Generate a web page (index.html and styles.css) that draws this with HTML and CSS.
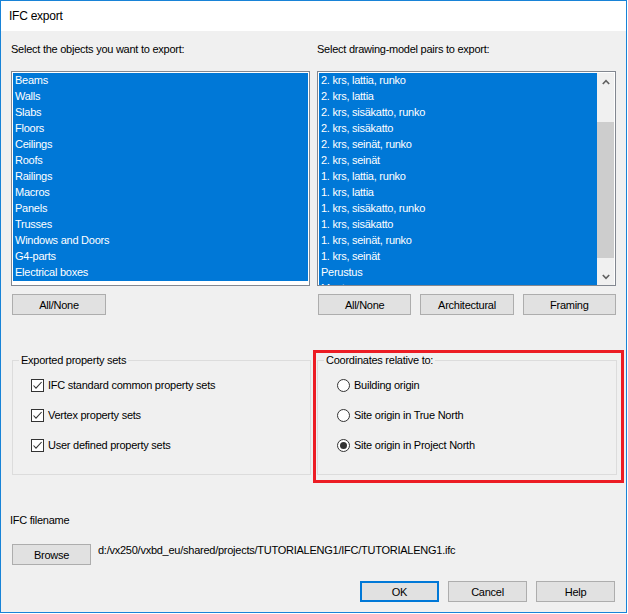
FILE: index.html
```html
<!DOCTYPE html>
<html>
<head>
<meta charset="utf-8">
<link rel="stylesheet" href="styles.css">
</head>
<body>
<div class="window">
  <div class="titlebar">IFC export</div>
  <div class="content">
    <div class="columns">
      <div class="col">
        <div class="label">Select the objects you want to export:</div>
        <div class="listbox">
          <div class="items">
            <div class="item">Beams</div>
            <div class="item">Walls</div>
            <div class="item">Slabs</div>
            <div class="item">Floors</div>
            <div class="item">Ceilings</div>
            <div class="item">Roofs</div>
            <div class="item">Railings</div>
            <div class="item">Macros</div>
            <div class="item">Panels</div>
            <div class="item">Trusses</div>
            <div class="item">Windows and Doors</div>
            <div class="item">G4-parts</div>
            <div class="item">Electrical boxes</div>
          </div>
        </div>
        <div class="btnrow">
          <div class="btn">All/None</div>
        </div>
      </div>
      <div class="col">
        <div class="label">Select drawing-model pairs to export:</div>
        <div class="listbox scroll">
          <div class="items">
            <div class="item">2. krs, lattia, runko</div>
            <div class="item">2. krs, lattia</div>
            <div class="item">2. krs, sisäkatto, runko</div>
            <div class="item">2. krs, sisäkatto</div>
            <div class="item">2. krs, seinät, runko</div>
            <div class="item">2. krs, seinät</div>
            <div class="item">1. krs, lattia, runko</div>
            <div class="item">1. krs, lattia</div>
            <div class="item">1. krs, sisäkatto, runko</div>
            <div class="item">1. krs, sisäkatto</div>
            <div class="item">1. krs, seinät, runko</div>
            <div class="item">1. krs, seinät</div>
            <div class="item">Perustus</div>
            <div class="item">Muut</div>
          </div>
          <div class="scrollbar">
            <div class="arrow">
              <svg width="8" height="6" viewBox="0 0 8 6"><polyline points="0.8,5 4,1.6 7.2,5" fill="none" stroke="#606060" stroke-width="1.6"/></svg>
            </div>
            <div class="track"><div class="thumb"></div></div>
            <div class="arrow">
              <svg width="8" height="6" viewBox="0 0 8 6"><polyline points="0.8,1 4,4.4 7.2,1" fill="none" stroke="#606060" stroke-width="1.6"/></svg>
            </div>
          </div>
        </div>
        <div class="btnrow">
          <div class="btn">All/None</div>
          <div class="btn">Architectural</div>
          <div class="btn">Framing</div>
        </div>
      </div>
    </div>

    <div class="groups">
      <fieldset class="group left">
        <legend>Exported property sets</legend>
        <div class="opt">
          <span class="check"><svg width="11" height="11" viewBox="0 0 11 11"><polyline points="1.5,5.5 4,8.2 9.6,2" fill="none" stroke="#333" stroke-width="1.1"/></svg></span>
          <span>IFC standard common property sets</span>
        </div>
        <div class="opt">
          <span class="check"><svg width="11" height="11" viewBox="0 0 11 11"><polyline points="1.5,5.5 4,8.2 9.6,2" fill="none" stroke="#333" stroke-width="1.1"/></svg></span>
          <span>Vertex property sets</span>
        </div>
        <div class="opt">
          <span class="check"><svg width="11" height="11" viewBox="0 0 11 11"><polyline points="1.5,5.5 4,8.2 9.6,2" fill="none" stroke="#333" stroke-width="1.1"/></svg></span>
          <span>User defined property sets</span>
        </div>
      </fieldset>
      <fieldset class="group right">
        <legend>Coordinates relative to:</legend>
        <div class="opt">
          <span class="radio"></span>
          <span>Building origin</span>
        </div>
        <div class="opt">
          <span class="radio"></span>
          <span>Site origin in True North</span>
        </div>
        <div class="opt">
          <span class="radio on"></span>
          <span>Site origin in Project North</span>
        </div>
      </fieldset>
    </div>

    <div class="filelabel">IFC filename</div>
    <div class="filerow">
      <div class="btn browse">Browse</div>
      <div class="path">d:/vx250/vxbd_eu/shared/projects/TUTORIALENG1/IFC/TUTORIALENG1.ifc</div>
    </div>

    <div class="footer">
      <div class="btn fbtn default">OK</div>
      <div class="btn fbtn">Cancel</div>
      <div class="btn fbtn">Help</div>
    </div>
  </div>
  <div class="highlight"></div>
</div>
</body>
</html>
```

FILE: styles.css
```css
html, body {
  margin: 0;
  padding: 0;
  background: #ffffff;
}

body {
  font-family: "Liberation Sans", Arial, sans-serif;
  font-size: 11px;
  letter-spacing: -0.25px;
  color: #000;
}

.window {
  position: relative;
  width: 627px;
  height: 613px;
  box-sizing: border-box;
  border: 1px solid #1883d7;
  background: #f0f0f0;
}

.titlebar {
  height: 30px;
  line-height: 30px;
  background: #ffffff;
  padding-left: 8px;
  font-size: 12px;
}

.content {
  padding: 0 10px 0 10px;
}

.columns {
  display: grid;
  grid-template-columns: 299px 299px;
  column-gap: 7px;
}

.col {
  display: flex;
  flex-direction: column;
}

.label {
  margin-top: 10px;
  height: 16px;
  line-height: 16px;
}

.listbox {
  margin-top: 14px;
  height: 215px;
  box-sizing: border-box;
  border: 1px solid #828790;
  background: #ffffff;
  padding: 1px 1px 0 1px;
  display: flex;
}

.items {
  flex: 1;
  overflow: hidden;
}

.item {
  height: 16px;
  line-height: 15px;
  background: #0078d7;
  color: #ffffff;
  padding-left: 2px;
  white-space: nowrap;
}

.scrollbar {
  width: 17px;
  display: flex;
  flex-direction: column;
  background: #f0f0f0;
}

.arrow {
  height: 17px;
  display: flex;
  align-items: center;
  justify-content: center;
}

.track {
  flex: 1;
}

.thumb {
  margin-top: 32px;
  height: 136px;
  background: #cdcdcd;
}

.btnrow {
  margin-top: 8px;
  display: flex;
  gap: 9px;
  padding-left: 1px;
}

.btn {
  width: 94px;
  height: 21px;
  box-sizing: border-box;
  border: 1px solid #adadad;
  background: #e1e1e1;
  display: flex;
  align-items: center;
  justify-content: center;
}

.groups {
  margin-top: 38px;
  margin-left: 1px;
  display: grid;
  grid-template-columns: 299px 300px;
  column-gap: 6px;
}

.group {
  margin: 0;
  padding: 3px 0 14px 18px;
  border: 1px solid #dcdcdc;
  min-width: 0;
}

.group.right {
  padding-left: 19px;
}

.group.left legend {
  margin-left: -12px;
}

.group.right legend {
  margin-left: -13px;
}

.group legend {
  padding: 0 2px;
  line-height: 14px;
}

.opt {
  height: 30px;
  display: flex;
  align-items: center;
  gap: 4px;
}

.check {
  width: 13px;
  height: 13px;
  box-sizing: border-box;
  border: 1px solid #333333;
  background: #ffffff;
  display: flex;
  align-items: center;
  justify-content: center;
}

.radio {
  width: 13px;
  height: 13px;
  box-sizing: border-box;
  border: 1px solid #333333;
  border-radius: 50%;
  background: #ffffff;
  display: flex;
  align-items: center;
  justify-content: center;
}

.radio.on::after {
  content: "";
  width: 7px;
  height: 7px;
  border-radius: 50%;
  background: #333333;
}

.filelabel {
  margin-top: 37px;
  margin-left: -1px;
  height: 16px;
  line-height: 16px;
}

.filerow {
  margin-top: 16px;
  display: flex;
  align-items: flex-start;
  padding-left: 1px;
}

.browse {
  width: 79px;
}

.path {
  margin-left: 7px;
  margin-top: -2px;
  line-height: 16px;
}

.footer {
  margin-top: 16px;
  display: flex;
  justify-content: flex-end;
  gap: 9px;
  padding-right: 1px;
}

.fbtn {
  width: 79px;
}

.fbtn.default {
  border: 2px solid #0078d7;
}

.highlight {
  position: absolute;
  left: 312px;
  top: 349px;
  width: 311px;
  height: 133px;
  box-sizing: border-box;
  border: 3px solid #ec1c24;
  pointer-events: none;
}
```
